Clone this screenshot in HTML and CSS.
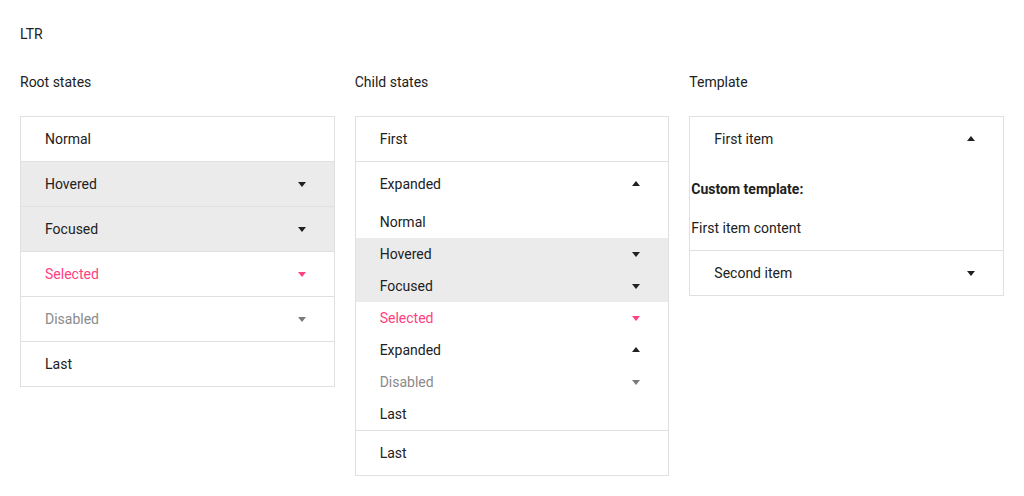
FILE: index.html
```html
<!DOCTYPE html>
<html>
<head>
<meta charset="utf-8">
<link rel="stylesheet" href="styles.css">
</head>
<body>
<div class="page">
  <div class="dir">LTR</div>
  <div class="cols">
    <div class="col">
      <div class="heading">Root states</div>
      <div class="panel">
        <div class="item"><span>Normal</span></div>
        <div class="item hover"><span>Hovered</span><i class="arrow down"></i></div>
        <div class="item hover"><span>Focused</span><i class="arrow down"></i></div>
        <div class="item selected"><span>Selected</span><i class="arrow down"></i></div>
        <div class="item disabled"><span>Disabled</span><i class="arrow down"></i></div>
        <div class="item"><span>Last</span></div>
      </div>
    </div>
    <div class="col">
      <div class="heading">Child states</div>
      <div class="panel">
        <div class="item"><span>First</span></div>
        <div class="item"><span>Expanded</span><i class="arrow up"></i></div>
        <div class="group">
          <div class="sub"><span>Normal</span></div>
          <div class="sub hover"><span>Hovered</span><i class="arrow down"></i></div>
          <div class="sub hover"><span>Focused</span><i class="arrow down"></i></div>
          <div class="sub selected"><span>Selected</span><i class="arrow down"></i></div>
          <div class="sub"><span>Expanded</span><i class="arrow up"></i></div>
          <div class="sub disabled"><span>Disabled</span><i class="arrow down"></i></div>
          <div class="sub"><span>Last</span></div>
        </div>
        <div class="item"><span>Last</span></div>
      </div>
    </div>
    <div class="col">
      <div class="heading">Template</div>
      <div class="panel">
        <div class="item"><span>First item</span><i class="arrow up"></i></div>
        <div class="content">
          <div class="ct-title">Custom template:</div>
          <div class="ct-text">First item content</div>
        </div>
        <div class="item"><span>Second item</span><i class="arrow down"></i></div>
      </div>
    </div>
  </div>
</div>
</body>
</html>
```
FILE: styles.css
```css
html, body {
  margin: 0;
  padding: 0;
  background: #ffffff;
}
body {
  font-family: Roboto, "Liberation Sans", sans-serif;
  font-size: 14px;
  line-height: 20px;
  color: #212121;
}
.page {
  padding: 24px 20px;
}
.dir {
  margin-bottom: 28px;
}
.cols {
  display: grid;
  grid-template-columns: 1fr 1fr 1fr;
  gap: 20px;
  align-items: start;
}
.heading {
  margin-bottom: 24px;
}
.panel {
  border: 1px solid #e0e0e0;
}
.item {
  display: flex;
  align-items: center;
  justify-content: space-between;
  height: 44px;
  padding: 0 24px;
  border-top: 1px solid #e0e0e0;
}
.panel > .item:first-child {
  border-top: none;
}
.group + .item, .content + .item {
  border-top: 1px solid #e0e0e0;
}
.sub {
  display: flex;
  align-items: center;
  justify-content: space-between;
  height: 32px;
  padding: 0 24px;
}
.hover {
  background: #ebebeb;
}
.selected {
  color: #ff4081;
}
.disabled {
  color: #8a8a8a;
}
.arrow {
  display: block;
  width: 16px;
  height: 16px;
  position: relative;
}
.arrow::before {
  content: "";
  position: absolute;
  left: 4px;
  width: 0;
  height: 0;
  border-left: 4px solid transparent;
  border-right: 4px solid transparent;
}
.arrow.down::before {
  top: 6px;
  border-top: 5px solid #212121;
}
.arrow.up::before {
  top: 5px;
  border-bottom: 5px solid #212121;
}
.selected .arrow.down::before {
  border-top-color: #ff4081;
}
.disabled .arrow.down::before {
  border-top-color: #7a7a7a;
}
.content {
  padding: 18px 0 12px 1px;
}
.ct-title {
  font-weight: bold;
}
.ct-text {
  margin-top: 19px;
}
```
